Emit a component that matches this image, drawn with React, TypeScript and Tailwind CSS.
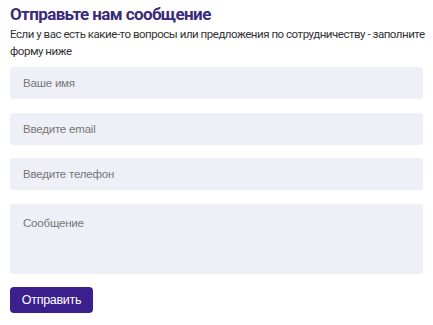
import React from "react";

const fieldClass =
  "h-[32px] w-full rounded-[3px] bg-[#efeff7] px-[13px] text-[11.5px] tracking-[-0.2px] text-[#333] placeholder:text-[#767676] outline-none";

export default function App() {
  return (
    <div className="w-[433px] h-[325px] bg-white px-[10px] pt-[3px] font-['Roboto',sans-serif]">
      <h2 className="text-[17px] leading-[22px] font-bold tracking-[-0.6px] text-[#3a2a7c]">
        Отправьте нам сообщение
      </h2>
      <p className="mt-[1px] whitespace-nowrap text-[11.5px] leading-[17px] tracking-[-0.47px] text-[#333]">
        Если у вас есть какие-то вопросы или предложения по сотрудничеству - заполните
        <br />
        форму ниже
      </p>
      <form className="mt-[7px] flex flex-col gap-[13.5px] font-['Liberation_Sans',Arial,sans-serif]">
        <input type="text" placeholder="Ваше имя" className={fieldClass} />
        <input type="email" placeholder="Введите email" className={fieldClass} />
        <input type="text" placeholder="Введите телефон" className={fieldClass} />
        <textarea
          placeholder="Сообщение"
          className="h-[70px] w-full resize-none rounded-[3px] bg-[#efeff7] px-[13px] pt-[11px] text-[11.5px] tracking-[-0.2px] text-[#333] placeholder:text-[#767676] outline-none"
        />
        <div>
          <button
            type="submit"
            className="h-[26px] w-[83px] rounded-[4px] bg-[#3b1f8c] text-[12.5px] tracking-[-0.3px] text-white"
          >
            Отправить
          </button>
        </div>
      </form>
    </div>
  );
}
